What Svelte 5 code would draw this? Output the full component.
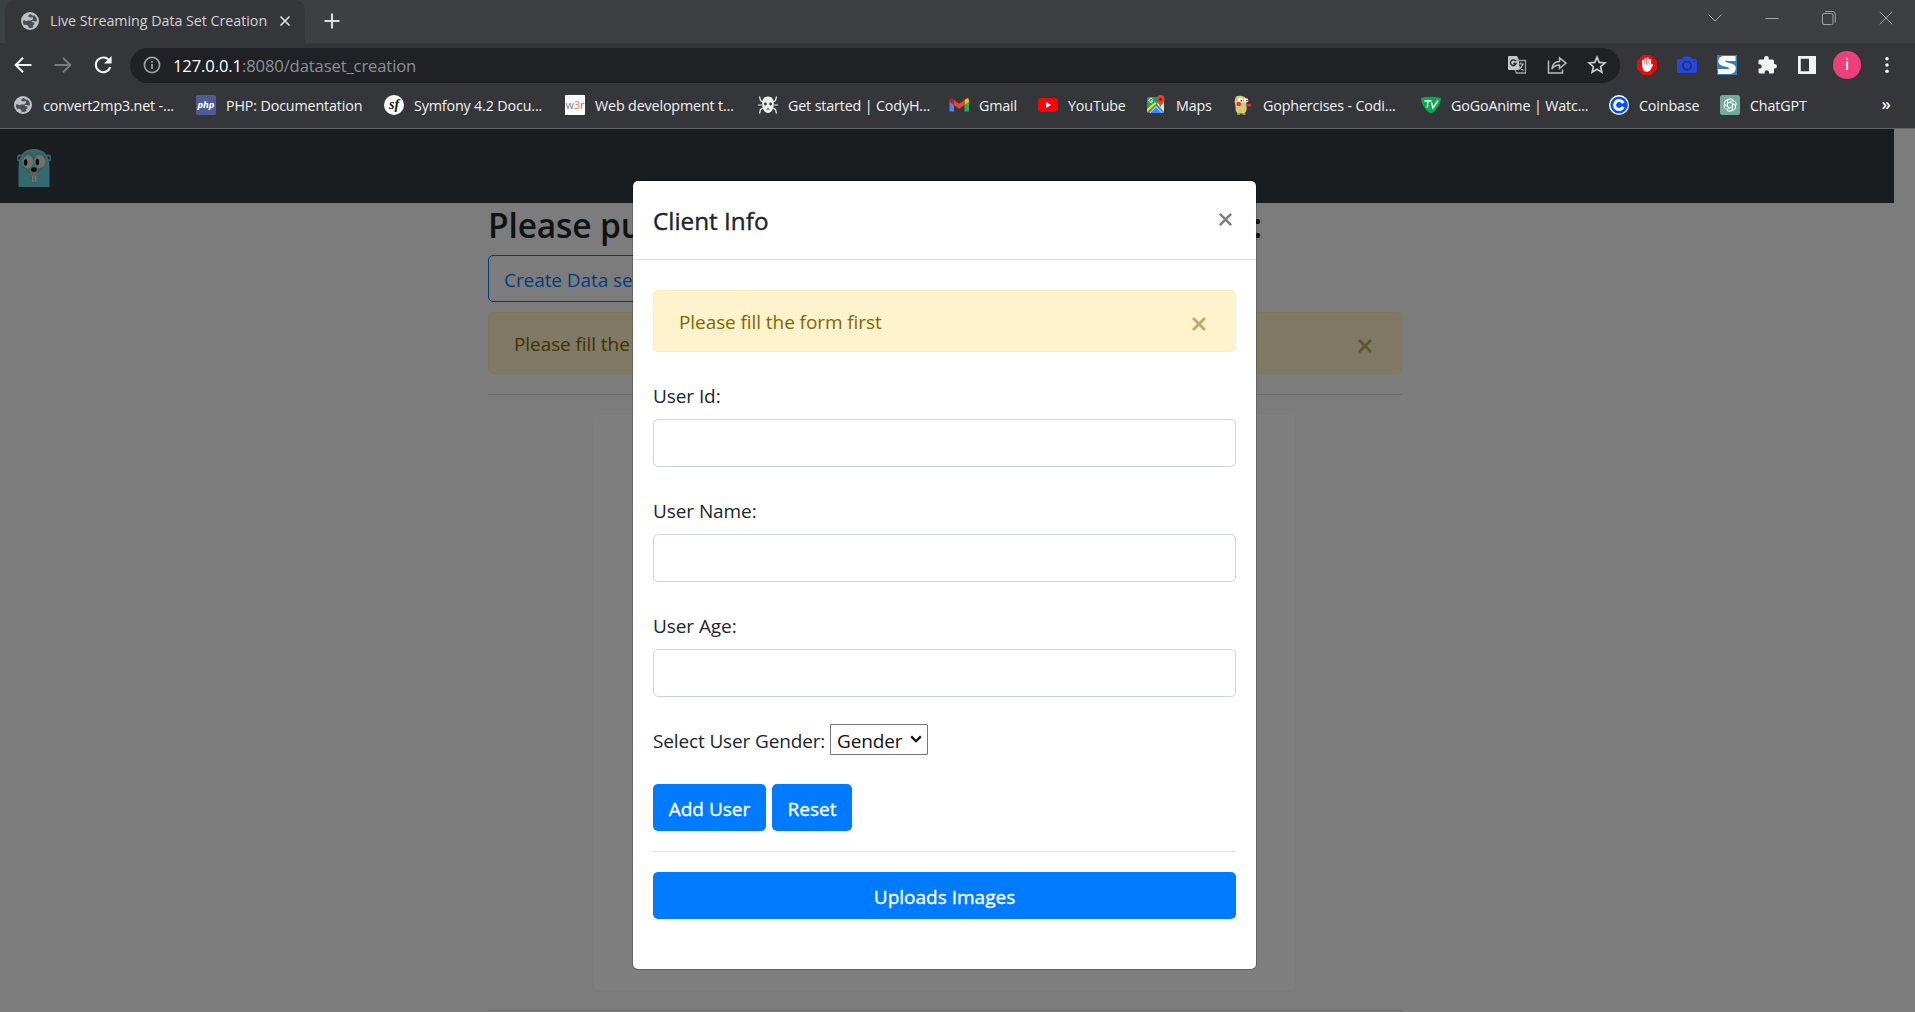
<script>
  const bookmarks = [
    { icon: 'globe', label: 'convert2mp3.net -...', width: 132 },
    { icon: 'php', label: 'PHP: Documentation', width: 137 },
    { icon: 'symfony', label: 'Symfony 4.2 Docu...', width: 130 },
    { icon: 'w3r', label: 'Web development t...', width: 142 },
    { icon: 'cody', label: 'Get started | CodyH...', width: 140 },
    { icon: 'gmail', label: 'Gmail', width: 38 },
    { icon: 'youtube', label: 'YouTube', width: 57 },
    { icon: 'maps', label: 'Maps', width: 36 },
    { icon: 'gopher', label: 'Gophercises - Codi...', width: 137 },
    { icon: 'gogo', label: 'GoGoAnime | Watc...', width: 137 },
    { icon: 'coinbase', label: 'Coinbase', width: 60 },
    { icon: 'chatgpt', label: 'ChatGPT', width: 58 }
  ];
  const fields = ['User Id:', 'User Name:', 'User Age:'];
  const petals = [0, 60, 120, 180, 240, 300];
</script>

{#snippet globe()}
  <circle cx="10" cy="10" r="9" fill="#bdc1c6" />
  <path d="M10.5 3 8.3 4.3 8.5 6 11 6.5 12.8 6 13 8 11 9.6 8 9.4 6.5 10.2 4.5 9.3 3 9.5Q2.6 12 4 14L6 13.8 8 14.4 8.6 16.8Q11.5 17.5 13.5 16L13 14.4 14.6 13 14.2 11.6 11.6 11 12.4 9.8 15 10.4 17 10.2Q17 6.5 14.5 4.6L13 4.8Z" fill="#4b4e53" />
{/snippet}

{#snippet cross()}
  <svg class="cross" viewBox="0 0 16 16"><path d="M2 2 14 14M14 2 2 14" stroke="currentColor" stroke-width="2.8" /></svg>
{/snippet}

<div class="window">
  <header class="chrome">
    <div class="strip">
      <div class="tab">
        <svg class="i20" viewBox="0 0 20 20">{@render globe()}</svg>
        <span class="tab-title">Live Streaming Data Set Creation</span>
        <svg class="tab-x" viewBox="0 0 12 12"><path d="M1.5 1.5 10.5 10.5M10.5 1.5 1.5 10.5" stroke="#dadce0" stroke-width="1.7" /></svg>
      </div>
      <svg class="plus" viewBox="0 0 16 16"><path d="M8 .5V15.5M.5 8H15.5" stroke="#dadce0" stroke-width="2.1" /></svg>
      <div class="win-buttons">
        <svg viewBox="0 0 14 14"><path d="M.5 3.5 7 10 13.5 3.5" /></svg>
        <svg viewBox="0 0 14 14"><path d="M.5 7.5H13.5" /></svg>
        <svg viewBox="0 0 14 14"><rect x=".5" y="2.5" width="10.5" height="11" rx="1.5" /><path d="M3 .5H10.5Q13.3.5 13.3 3.5V11.5" /></svg>
        <svg viewBox="0 0 14 14"><path d="M.8.8 13.2 13.2M13.2.8.8 13.2" /></svg>
      </div>
    </div>

    <div class="toolbar">
      <div class="nav">
        <svg viewBox="0 0 20 20" stroke="#f1f3f4"><path d="M18.5 10H3M10 2.7 2.7 10 10 17.3" /></svg>
        <svg viewBox="0 0 20 20" stroke="#77797d"><path d="M1.5 10H17M10 2.7 17.3 10 10 17.3" /></svg>
        <svg viewBox="0 0 20 20" stroke="#f1f3f4"><path d="M16.4 5.7A7.4 7.4 0 1 0 17.3 12.2" /><path d="M18.6 1V8.6H11Z" fill="#f1f3f4" stroke="none" /></svg>
      </div>
      <div class="omnibox">
        <svg class="info" viewBox="0 0 18 18"><circle cx="9" cy="9" r="7.6" /><path d="M9 8V13M9 5V6.8" /></svg>
        <span class="url"><b>127.0.0.1</b>:8080/dataset_creation</span>
        <div class="omni-actions">
          <svg viewBox="0 0 20 20">
            <path d="M2 1H10L12 5V15H2Q1 15 1 14V2Q1 1 2 1Z" fill="#c4c6c9" />
            <path d="M9 5.5H18.5V18H9.5L8 15" fill="none" stroke="#9a9da1" stroke-width="1.3" />
            <path d="M8.7 6.2A2.8 2.8 0 1 0 9 8.5H6.4" fill="none" stroke="#202124" stroke-width="1.3" />
            <path d="M10.5 9H17M13.7 7.5V9M16 9Q15 12.5 11 15M12 11Q13.5 14 16.5 15.5" fill="none" stroke="#b5b7ba" stroke-width="1.2" />
          </svg>
          <svg viewBox="0 0 20 20" fill="none" stroke="#b9bbbe" stroke-width="1.5"><path d="M1.5 5.5V18H15.5V14.5M4.8 14Q5.5 6.7 12.5 6.5V2.8L19 8.2 12.5 13.5V10Q7.5 10 4.8 14Z" /></svg>
          <svg viewBox="0 0 20 20" fill="none" stroke="#c8cacd" stroke-width="1.7"><path d="M10 2.2 12.2 7.4 18 7.9 13.6 11.7 14.9 17.3 10 14.3 5.1 17.3 6.4 11.7 2 7.9 7.8 7.4Z" /></svg>
        </div>
      </div>
      <div class="extensions">
        <svg viewBox="0 0 20 20">
          <path d="M6 0H14L20 6V14L14 20H6L0 14V6Z" fill="#ea0a0a" />
          <path d="M6 11V5.8M8.4 10V3.8M10.8 10V3.3M13.2 10.5V4.8" stroke="#fff" stroke-width="1.9" stroke-linecap="round" />
          <path d="M5.1 9.5H14.1L15 9.3Q16.3 8.8 16 10L13.5 15Q12.6 16.8 10 16.8 6.6 16.8 5.8 14Z" fill="#fff" />
        </svg>
        <svg viewBox="0 0 20 20">
          <path d="M2 4H5L7 1.5H13L15 4H18Q20 4 20 6V16Q20 18 18 18H2Q0 18 0 16V6Q0 4 2 4Z" fill="#2546e0" />
          <circle cx="10" cy="10.7" r="4.2" fill="#2546e0" stroke="#28315c" stroke-width="1.7" /><circle cx="17.4" cy="6.5" r=".8" fill="#28315c" />
        </svg>
        <svg viewBox="0 0 20 20">
          <rect width="20" height="20" fill="#3b7db5" />
          <path d="M18.5 1V6H12Q8 5 8.2 6.6 9 7.8 14 8.5 19 9.5 18.8 13.5 18.5 19 11 19H1V14H8Q12 14.5 12 13.2 11.5 12 7 11.3 1.3 10.2 1.3 6 1.5 1 8 1Z" fill="#fff" />
        </svg>
        <svg viewBox="0 0 20 20"><path d="M7 4.5V3.5A2.4 2.4 0 0 1 11.8 3.5V4.5H15.5Q17 4.5 17 6V9H17.6A2.3 2.3 0 0 1 17.6 13.6H17V17Q17 18.5 15.5 18.5H12V17.5A2.2 2.2 0 0 0 7.6 17.5V18.5H3Q1.5 18.5 1.5 17V13.6H2.5A2.2 2.2 0 0 0 2.5 9.2H1.5V6Q1.5 4.5 3 4.5Z" fill="#f1f3f4" /></svg>
        <svg viewBox="0 0 20 20"><path d="M1 1H19V19H1ZM3.8 3.8V16.2H12V3.8Z" fill="#f1f3f4" fill-rule="evenodd" /></svg>
        <span class="avatar">i</span>
        <svg class="dots" viewBox="0 0 20 20" fill="#f1f3f4"><circle cx="10" cy="3" r="2" /><circle cx="10" cy="10" r="2" /><circle cx="10" cy="17" r="2" /></svg>
      </div>
    </div>

    <nav class="bookmarks">
      {#each bookmarks as mark}
        <div class="bookmark">
          <svg class="i20" viewBox="0 0 20 20">
            {#if mark.icon === 'globe'}
              {@render globe()}
            {:else if mark.icon === 'php'}
              <rect width="20" height="20" rx="1.5" fill="#4f5b93" />
              <text x="10" y="12.8" class="t-php" text-anchor="middle">php</text>
            {:else if mark.icon === 'symfony'}
              <circle cx="10" cy="10" r="10" fill="#fff" />
              <text x="10" y="14.2" class="t-sf" text-anchor="middle">sf</text>
            {:else if mark.icon === 'w3r'}
              <rect width="20" height="20" fill="#fff" />
              <text x="10" y="14" class="t-w3r" text-anchor="middle" fill="#4d7fb8">w<tspan fill="#ef7a3c">3</tspan>r</text>
            {:else if mark.icon === 'cody'}
              <path d="M5 7 2.5 5.5 1.5 1.5M4 10H0M5 13 2.5 14.5 1.5 18.5M15 7 17.5 5.5 18.5 1.5M16 10H20M15 13 17.5 14.5 18.5 18.5" fill="none" stroke="#ededed" stroke-width="1.2" />
              <path d="M10 1.5C14.5 1.5 16.2 5 15.8 9.5 15.5 14 13.5 18 10 18 6.5 18 4.5 14 4.2 9.5 3.8 5 5.5 1.5 10 1.5Z" fill="#ededed" />
              <circle cx="7.4" cy="9" r="1.4" fill="#35363a" /><circle cx="12.6" cy="9" r="1.4" fill="#35363a" /><path d="M8.4 14.6Q10 12 11.6 14.6Z" fill="#35363a" />
            {:else if mark.icon === 'gmail'}
              <path d="M.5 5V16.5H5V9Z" fill="#4285f4" /><path d="M15.5 9V16.5H20V5Z" fill="#34a853" />
              <path d="M15.5 5 17.5 3.5Q20 2.8 20 5.5L19.8 7 15.5 10Z" fill="#fbbc04" />
              <path d="M5 5 10.2 8.8 15.5 5V10L10.2 13.9 5 10Z" fill="#ea4335" /><path d="M5 5 3 3.5Q.5 3 .5 5.5V7L5 10Z" fill="#c5221f" />
            {:else if mark.icon === 'youtube'}
              <rect y="3" width="20" height="14" rx="3.5" fill="#f00" /><path d="M8 7 13.2 10 8 13Z" fill="#fff" />
            {:else if mark.icon === 'maps'}
              <rect x="1" y="2" width="17" height="16" rx="1.5" fill="#1fa35b" />
              <path d="M2 18 10 10 18 18Z" fill="#4285f4" /><path d="M1 14V17L10.5 8.5 9 7Z" fill="#fdd835" /><path d="M11 9 18 17V7L14 5Z" fill="#e4e5e8" />
              <path d="M4 18 10 11.5 16 18" fill="none" stroke="#e8eaed" />
              <path d="M14.5 0A4.2 4.2 0 0 1 18.6 4.5Q18.3 7 16 9.2L14.5 12 13 9.2Q10.4 7 10.4 4.3A4.2 4.2 0 0 1 14.5 0Z" fill="#e04335" /><circle cx="14.5" cy="4.3" r="1.6" fill="#8c1f19" />
              <path d="M6.6 4.4A1.9 1.9 0 1 0 6.8 6H5" fill="none" stroke="#fff" />
            {:else if mark.icon === 'gopher'}
              <path d="M3 1.5Q8-.5 12.5 2.5L13.5 10Q14.5 17 11 18.5H5.5Q2 17 2.5 11L1.5 6Z" fill="#d5cc72" />
              <circle cx="7.5" cy="5.6" r="2.5" fill="#fff" /><circle cx="13.2" cy="5.4" r="2.1" fill="#fff" /><circle cx="8.3" cy="5.6" r=".9" fill="#222" /><circle cx="13.9" cy="5.6" r=".8" fill="#222" />
              <circle cx="5.8" cy="9" r="2.3" fill="#d8324a" /><path d="M13 9 17.5 8.8 18.2 11 16 11.8 12.6 10.2Z" fill="#d8324a" /><path d="M4 19H7M9.5 19H12.5" stroke="#b9a95c" stroke-width="1.5" />
            {:else if mark.icon === 'gogo'}
              <path d="M0 3Q10 .5 20 3 19 14 10 18.5 1 14 0 3Z" fill="#0aa84f" />
              <path d="M3.5 6H10.5M7 6 6.2 13M10.5 7.5 12 13 17 5.5" fill="none" stroke="#fff" stroke-width="1.4" />
            {:else if mark.icon === 'coinbase'}
              <circle cx="10" cy="10" r="10" fill="#fff" /><circle cx="10" cy="10" r="8.6" fill="#0052ff" />
              <path d="M14.2 8.2A4.5 4.5 0 1 0 14.2 11.8" fill="none" stroke="#fff" stroke-width="3" /><path d="M15.6 8.4H18.6V11.6H15.6Z" fill="#0052ff" />
            {:else if mark.icon === 'chatgpt'}
              <rect width="20" height="20" rx="2.5" fill="#74a99b" />
              {#each petals as turn}
                <path d="M7.4 8.6 11.4 6.2Q14 4.8 15.6 7.2 16.6 9.2 15.4 11" transform="rotate({turn} 10 10)" fill="none" stroke="#fff" stroke-width="1" />
              {/each}
            {/if}
          </svg>
          <span style="width: {mark.width}px">{mark.label}</span>
        </div>
      {/each}
      <span class="more">»</span>
    </nav>
  </header>

  <div class="viewport">
    <div class="page">
      <div class="navbar">
        <svg class="logo" viewBox="0 0 34 38">
          <circle cx="3" cy="9" r="2.6" fill="#30464d" stroke="#68c9d6" stroke-width="1.8" /><circle cx="31" cy="9" r="2.6" fill="#30464d" stroke="#68c9d6" stroke-width="1.8" />
          <path d="M1.5 38V18Q2 0 17 0 32 0 32.5 18V38Z" fill="#6bd3e2" />
          <path d="M9 5Q14 2 16.5 9 19 2 25 5 30 9 26 18L20 24 17 34 13 24Q5 19 6.5 10Z" fill="none" stroke="#8cad6a" stroke-width="1.3" />
          <ellipse cx="10.8" cy="13" rx="5.3" ry="6.4" fill="#e6e2de" /><ellipse cx="22.8" cy="12.5" rx="5.3" ry="6.4" fill="#e6e2de" />
          <ellipse cx="8.6" cy="13.5" rx="1.8" ry="3.2" fill="#151515" /><ellipse cx="20.4" cy="13" rx="1.8" ry="3.2" fill="#151515" />
          <path d="M13 24Q17 21 21 24L20 28H14Z" fill="#d7bd95" /><ellipse cx="17" cy="20.5" rx="2.8" ry="2.3" fill="#111" /><path d="M15 27H19.2V33H15Z" fill="#eee" /><path d="M17 27V33" stroke="#888" />
        </svg>
      </div>
      <main class="container">
        <h1><span>Please pu</span><span>:</span></h1>
        <button class="outline">Create Data set</button>
        <div class="alert"><span>Please fill the form first</span>{@render cross()}</div>
        <hr />
        <div class="stage"></div>
        <hr />
      </main>
    </div>

    <div class="backdrop">
      <section class="modal">
        <div class="modal-head"><h5>Client Info</h5>{@render cross()}</div>
        <div class="modal-body">
          <div class="alert"><span>Please fill the form first</span>{@render cross()}</div>
          {#each fields as field, n}
            <div class="group"><label for="field-{n}">{field}</label><input id="field-{n}" type="text" /></div>
          {/each}
          <div class="gender">
            <span>Select User Gender:</span>
            <div class="select"><span>Gender</span><svg viewBox="0 0 12 8"><path d="M1.2 1.4 6 6.2 10.8 1.4" fill="none" stroke="#111" stroke-width="2.3" /></svg></div>
          </div>
          <div class="actions"><button class="primary add">Add User</button><button class="primary reset">Reset</button></div>
          <hr />
          <button class="primary upload">Uploads Images</button>
        </div>
      </section>
    </div>
  </div>
</div>

<style>
  :global(body) { margin: 0; overflow: hidden; }
  .window, .window * { box-sizing: border-box; }
  .window { width: 1915px; height: 1012px; display: flex; flex-direction: column; font-family: 'Open Sans', 'Noto Sans', sans-serif; overflow: hidden; }
  svg { display: block; flex: none; }
  .i20 { width: 20px; height: 20px; }

  .chrome { height: 129px; background: #35363a; border-bottom: 1px solid #5f6165; flex: none; }
  .strip { height: 43px; background: #3c4043; display: flex; align-items: center; padding-left: 5px; }
  .tab { width: 300px; height: 43px; background: #35363a; border-radius: 10px 10px 0 0; display: flex; align-items: center; padding: 0 14px 2px 15px; }
  .tab-title { margin-left: 10px; width: 218px; font-size: 14.3px; letter-spacing: -.04px; color: #d0d2d5; white-space: nowrap; }
  .tab-x { width: 12px; height: 12px; margin-left: 12px; }
  .plus { width: 16px; height: 16px; margin: -1px 0 0 19px; }
  .win-buttons { margin-left: auto; display: flex; gap: 43px; padding-right: 22px; margin-top: -7px; }
  .win-buttons svg { width: 14px; height: 14px; fill: none; stroke: #a0a3a5; stroke-width: 1; }

  .toolbar { height: 40px; padding: 5px 0 0 13px; display: flex; align-items: center; }
  .nav { display: flex; gap: 20px; width: 117px; padding-bottom: 2px; }
  .nav svg { width: 20px; height: 20px; fill: none; stroke-width: 2.1; }
  .omnibox { width: 1490px; height: 35px; border-radius: 18px; background: #202124; display: flex; align-items: center; padding: 0 13px 1px; }
  .info { width: 18px; height: 18px; fill: none; stroke: #9aa0a6; stroke-width: 1.7; }
  .url { margin-left: 12px; font-size: 16.6px; letter-spacing: -.12px; color: #8d9196; white-space: nowrap; }
  .url b { color: #fff; font-weight: 400; }
  .omni-actions { margin-left: auto; display: flex; gap: 20px; }
  .omni-actions svg { width: 20px; height: 20px; }
  .extensions { display: flex; align-items: center; gap: 20px; padding: 0 0 1px 17px; }
  .extensions svg { width: 20px; height: 20px; }
  .avatar { width: 28px; height: 28px; margin: 0 -4px; border-radius: 50%; background: #ec407a; color: #fff; font: 17px/27px Roboto, sans-serif; text-align: center; }
  .extensions .dots { width: 18px; height: 18px; margin-left: 1px; }

  .bookmarks { height: 45px; display: flex; align-items: center; gap: 21px; padding: 0 24px 1px 13px; font-size: 14.3px; color: #f1f3f4; }
  .bookmark { display: flex; align-items: center; gap: 10px; }
  .bookmark span { white-space: nowrap; letter-spacing: -.15px; }
  .more { margin-left: auto; font-size: 17px; font-weight: 600; margin-top: -4px; }
  .t-php { font: italic bold 9.5px 'Open Sans', sans-serif; fill: #fff; }
  .t-sf { font: italic bold 14px 'Liberation Serif', serif; fill: #111; }
  .t-w3r { font: 10.5px 'Open Sans', sans-serif; }

  .viewport { position: relative; height: 883px; }
  .page { height: 883px; background: #f8f9fa; color: #212529; overflow: hidden; }
  .navbar { width: 1894px; height: 74px; background: #343a40; padding: 20px 17px; }
  .logo { width: 34px; height: 38px; }
  .container { width: 914px; margin-left: 488px; }
  h1 { width: 774px; height: 42px; margin: 0 0 10px; display: flex; justify-content: space-between; font-size: 33.5px; line-height: 44px; font-weight: 600; letter-spacing: -.15px; }
  .outline { width: 190px; height: 47px; display: block; border: 1px solid #007bff; border-radius: 5px; background: none; color: #007bff; font: 19px 'Open Sans', sans-serif; letter-spacing: -.08px; padding: 2px 15px 0; text-align: left; white-space: nowrap; }
  .alert { height: 62px; display: flex; align-items: center; justify-content: space-between; border: 1px solid #ffeeba; border-radius: 5px; background: #fff3cd; color: #856404; padding: 2px 28px 0 25px; font-size: 19px; letter-spacing: -.08px; }
  .alert .cross { opacity: .5; margin-top: 4px; }
  .cross { width: 16px; height: 16px; }
  .container .alert { margin-top: 10px; }
  hr { border: 0; border-top: 1px solid rgba(0, 0, 0, .1); margin: 20px 0; }
  .stage { width: 701px; height: 575px; margin-left: 106px; border-radius: 5px; background: #fff; }

  .backdrop { position: absolute; inset: 0; background: rgba(0, 0, 0, .5); padding: 51px 0 0 632px; }
  .modal { width: 625px; height: 790px; background: #fff; background-clip: padding-box; border: 1px solid rgba(0, 0, 0, .2); border-radius: 6px; color: #212529; }
  .modal-head { height: 79px; display: flex; justify-content: space-between; align-items: center; padding: 0 23px 0 20px; border-bottom: 1px solid #dee2e6; }
  .modal-head .cross { color: #7f7f7f; margin-top: -2px; width: 15px; height: 15px; }
  h5 { margin: 2px 0 0; font-size: 24.3px; line-height: 38px; font-weight: 500; -webkit-text-stroke: .4px currentColor; }
  .modal-body { padding: 30px 20px; font-size: 19px; letter-spacing: -.08px; }
  .modal-body .alert { margin-bottom: 29px; }
  .group { height: 115px; }
  label { display: block; height: 38px; line-height: 30px; }
  input { display: block; width: 583px; height: 48px; border: 1px solid #ced4da; border-radius: 5px; background: #fff; }
  .gender { display: flex; gap: 6px; height: 60px; align-items: flex-start; line-height: 30px; margin-top: -2px; letter-spacing: -.14px; }
  .gender > span { width: 171px; white-space: nowrap; padding-top: 2px; }
  .select { width: 98px; height: 31px; border: 1px solid #767676; border-radius: 1px; color: #111; display: flex; align-items: center; justify-content: space-between; padding: 3px 5px 0 6px; }
  .select svg { width: 12px; height: 8px; margin-top: -4px; }
  .actions { display: flex; gap: 6px; }
  .primary { height: 47px; border: 0; border-radius: 5px; background: #007bff; color: #fff; font: 500 19px 'Open Sans', sans-serif; -webkit-text-stroke: .35px currentColor; padding: 3px 0 0; white-space: nowrap; }
  .add { width: 113px; }
  .reset { width: 80px; }
  .modal-body hr { margin: 20px 0; }
  .upload { display: block; width: 583px; }
</style>
